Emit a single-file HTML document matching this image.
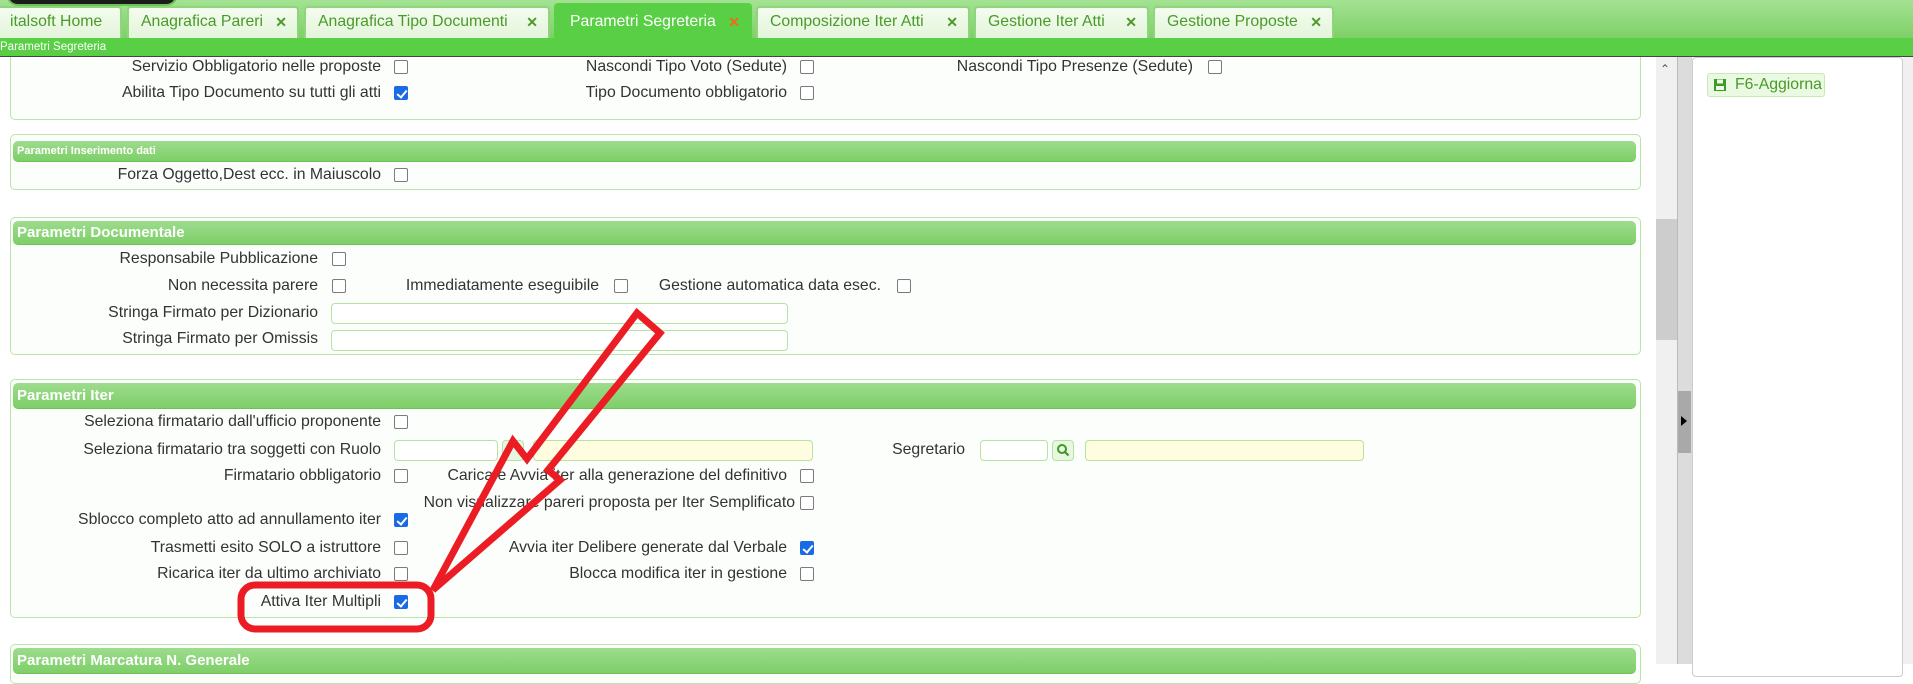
<!DOCTYPE html>
<html><head><meta charset="utf-8">
<style>
*{box-sizing:border-box;margin:0;padding:0}
body{width:1913px;height:664px;overflow:hidden;position:relative;background:#fff;font-family:"Liberation Sans",sans-serif;font-size:15.8px;color:#333}
.a{position:absolute}
.topbar{left:0;top:0;width:1913px;height:38px;background:linear-gradient(#a3e293,#7fd068)}
.tab{position:absolute;top:6px;height:32px;background:linear-gradient(#f4fcef,#e3f5da);border:2px solid #8fd57c;border-bottom:none;border-radius:4px 4px 0 0;color:#4a9a2a;font-size:15.8px;line-height:28px;padding-left:12px}
.tab .x{position:absolute;right:10px;top:0;font-weight:bold;color:#4a9a2a;font-size:14px}
.tab.act{background:#59cf45;color:#fff;border-color:#59cf45;top:3px;height:35px;line-height:34px;padding-left:14px}
.tab.act .x{color:#f06a1a;line-height:34px}
.strip{left:0;top:38px;width:1913px;height:19px;background:#59cf45;color:#fff;font-size:11.5px;line-height:18px;border-bottom:1px solid #444;z-index:5}
.fs{position:absolute;left:10px;width:1631px;background:#fcfefc;border:1px solid #b8e6a9;border-radius:5px}
.hd{position:absolute;left:2px;right:4px;background:linear-gradient(#9ddc8d,#7ecf69);border-radius:5px;color:#fff;font-weight:bold;padding-left:4px;border-bottom:1px solid #6cc356}
.l{position:absolute;text-align:right;white-space:nowrap;line-height:18px}
.cb{position:absolute;width:14px;height:14px;border:1.5px solid #7a7a7f;border-radius:2px;background:#fff}
.cb.c{background:#1a6ae6;border-color:#1a6ae6}
.cb.c::after{content:"";position:absolute;left:3.5px;top:0.5px;width:4px;height:8px;border:solid #fff;border-width:0 2px 2px 0;transform:rotate(40deg)}
.in{position:absolute;height:21px;border:1px solid #b5e3a2;border-radius:4px;background:#fff}
.in.y{background:#fefde0}
</style></head><body>
<div class="a topbar"></div>
<div class="a" style="left:6px;top:-6px;width:172px;height:12px;background:#1b1b1b;border:2px solid #6cc356;border-radius:0 0 12px 12px"></div>
<div class="tab" style="left:-4px;width:126px">italsoft Home</div>
<div class="tab" style="left:127px;width:172px">Anagrafica Pareri<span class="x">✕</span></div>
<div class="tab" style="left:304px;width:246px">Anagrafica Tipo Documenti<span class="x">✕</span></div>
<div class="tab act" style="left:554px;width:198px">Parametri Segreteria<span class="x">✕</span></div>
<div class="tab" style="left:756px;width:214px">Composizione Iter Atti<span class="x">✕</span></div>
<div class="tab" style="left:974px;width:175px">Gestione Iter Atti<span class="x">✕</span></div>
<div class="tab" style="left:1153px;width:181px">Gestione Proposte<span class="x">✕</span></div>
<div class="a strip">Parametri Segreteria</div>

<!-- FS1 -->
<div class="fs" style="top:40px;height:80px"></div>
<div class="l" style="left:0;width:381px;top:58px">Servizio Obbligatorio nelle proposte</div><div class="cb" style="left:394px;top:60px"></div>
<div class="l" style="left:0;width:381px;top:84px">Abilita Tipo Documento su tutti gli atti</div><div class="cb c" style="left:394px;top:86px"></div>
<div class="l" style="left:400px;width:387px;top:58px">Nascondi Tipo Voto (Sedute)</div><div class="cb" style="left:800px;top:60px"></div>
<div class="l" style="left:400px;width:387px;top:84px">Tipo Documento obbligatorio</div><div class="cb" style="left:800px;top:86px"></div>
<div class="l" style="left:800px;width:393px;top:58px">Nascondi Tipo Presenze (Sedute)</div><div class="cb" style="left:1208px;top:60px"></div>

<!-- FS2 -->
<div class="fs" style="top:134px;height:56px"><div class="hd" style="top:6px;height:21px;font-size:11px;line-height:20px">Parametri Inserimento dati</div></div>
<div class="l" style="left:0;width:381px;top:166px">Forza Oggetto,Dest ecc. in Maiuscolo</div><div class="cb" style="left:394px;top:168px"></div>

<!-- FS3 -->
<div class="fs" style="top:217px;height:138px"><div class="hd" style="top:3px;height:24px;font-size:15px;line-height:24px">Parametri Documentale</div></div>
<div class="l" style="left:0;width:318px;top:250px">Responsabile Pubblicazione</div><div class="cb" style="left:332px;top:252px"></div>
<div class="l" style="left:0;width:318px;top:277px">Non necessita parere</div><div class="cb" style="left:332px;top:279px"></div>
<div class="l" style="left:350px;width:249px;top:277px">Immediatamente eseguibile</div><div class="cb" style="left:614px;top:279px"></div>
<div class="l" style="left:630px;width:251px;top:277px">Gestione automatica data esec.</div><div class="cb" style="left:897px;top:279px"></div>
<div class="l" style="left:0;width:318px;top:304px">Stringa Firmato per Dizionario</div><div class="in" style="left:331px;top:303px;width:457px"></div>
<div class="l" style="left:0;width:318px;top:330px">Stringa Firmato per Omissis</div><div class="in" style="left:331px;top:330px;width:457px"></div>

<!-- FS4 -->
<div class="fs" style="top:379px;height:239px"><div class="hd" style="top:3px;height:26px;font-size:15px;line-height:26px">Parametri Iter</div></div>
<div class="l" style="left:0;width:381px;top:413px">Seleziona firmatario dall'ufficio proponente</div><div class="cb" style="left:394px;top:415px"></div>
<div class="l" style="left:0;width:381px;top:441px">Seleziona firmatario tra soggetti con Ruolo</div>
<div class="in" style="left:394px;top:440px;width:104px"></div>
<div class="in" style="left:502px;top:440px;width:22px;background:#e8f7e0"></div>
<div class="in y" style="left:533px;top:440px;width:280px"></div>
<div class="l" style="left:850px;width:115px;top:441px">Segretario</div>
<div class="in" style="left:980px;top:440px;width:68px"></div>
<div class="in" style="left:1052px;top:440px;width:22px;background:#e8f7e0"><svg width="20" height="19" viewBox="0 0 20 19"><circle cx="9" cy="8" r="4" fill="none" stroke="#3d9a25" stroke-width="2"/><line x1="12" y1="11" x2="15.5" y2="14.5" stroke="#3d9a25" stroke-width="2.2"/></svg></div>
<div class="in y" style="left:1085px;top:440px;width:279px"></div>
<div class="l" style="left:0;width:381px;top:467px">Firmatario obbligatorio</div><div class="cb" style="left:394px;top:469px"></div>
<div class="l" style="left:400px;width:387px;top:467px">Carica e Avvia iter alla generazione del definitivo</div><div class="cb" style="left:800px;top:469px"></div>
<div class="l" style="left:300px;width:495px;top:494px">Non visualizzare pareri proposta per Iter Semplificato</div><div class="cb" style="left:800px;top:496px"></div>
<div class="l" style="left:0;width:381px;top:511px">Sblocco completo atto ad annullamento iter</div><div class="cb c" style="left:394px;top:513px"></div>
<div class="l" style="left:0;width:381px;top:539px">Trasmetti esito SOLO a istruttore</div><div class="cb" style="left:394px;top:541px"></div>
<div class="l" style="left:400px;width:387px;top:539px">Avvia iter Delibere generate dal Verbale</div><div class="cb c" style="left:800px;top:541px"></div>
<div class="l" style="left:0;width:381px;top:565px">Ricarica iter da ultimo archiviato</div><div class="cb" style="left:394px;top:567px"></div>
<div class="l" style="left:400px;width:387px;top:565px">Blocca modifica iter in gestione</div><div class="cb" style="left:800px;top:567px"></div>
<div class="l" style="left:0;width:381px;top:593px">Attiva Iter Multipli</div><div class="cb c" style="left:394px;top:595px"></div>

<!-- FS5 -->
<div class="fs" style="top:644px;height:40px"><div class="hd" style="top:3px;height:26px;font-size:15px;line-height:26px">Parametri Marcatura N. Generale</div></div>

<!-- scrollbar & right panel -->
<div class="a" style="left:1656px;top:57px;width:21px;height:607px;background:#f0f0f0"></div>
<div class="a" style="left:1660px;top:62px;font-size:12px;color:#555">&#8963;</div>
<div class="a" style="left:1656px;top:219px;width:21px;height:121px;background:#cdcdcd"></div>
<div class="a" style="left:1677px;top:57px;width:15px;height:607px;background:#dcdcdc;border-left:1px solid #bbb"></div>
<div class="a" style="left:1678px;top:391px;width:13px;height:62px;background:#a9a9a9"></div>
<div class="a" style="left:1681px;top:416px;width:0;height:0;border-left:6px solid #000;border-top:5px solid transparent;border-bottom:5px solid transparent"></div>
<div class="a" style="left:1692px;top:57px;width:211px;height:620px;background:#fff;border:1px solid #ccc;border-radius:4px"></div>
<div class="a" style="left:1903px;top:57px;width:10px;height:607px;background:#f0f0f0"></div>
<div class="a" style="left:1707px;top:73px;width:118px;height:24px;background:#eaf9e2;border:1px solid #c5ebb4;border-radius:3px;color:#4a9a2a;font-size:15.8px;line-height:22px;padding-left:27px">F6-Aggiorna</div>
<svg class="a" style="left:1713px;top:78px" width="14" height="14" viewBox="0 0 14 14"><rect x="1" y="1" width="12" height="12" fill="#3d9a25"/><rect x="4" y="1.5" width="6" height="4" fill="#eaf9e2"/><rect x="3" y="8" width="8" height="4" fill="#eaf9e2"/></svg>

<!-- annotation -->
<svg class="a" style="left:0;top:0" width="1913" height="664">
<polygon points="637,313 660,333 548,470 560,480 433,590 513,441 527,459" fill="none" stroke="#ec1c24" stroke-width="7" stroke-linejoin="miter"/>
<rect x="241" y="585" width="190" height="44" rx="14" fill="none" stroke="#ec1c24" stroke-width="7"/>
</svg>
</body></html>
